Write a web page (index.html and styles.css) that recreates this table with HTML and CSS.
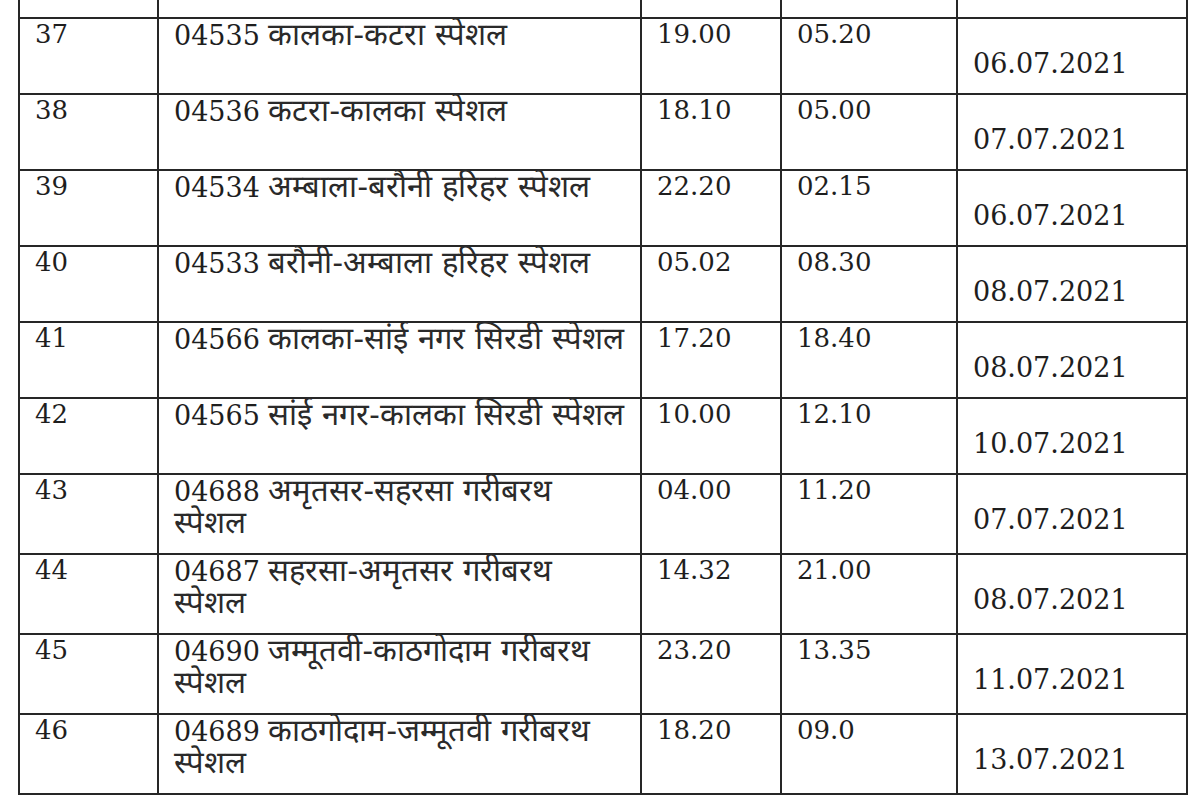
FILE: index.html
```html
<!DOCTYPE html>
<html lang="hi">
<head>
<meta charset="utf-8">
<title>स्पेशल ट्रेन सूची</title>
<link rel="stylesheet" href="styles.css">
</head>
<body>
<table class="trains">
  <colgroup>
    <col class="c-no">
    <col class="c-name">
    <col class="c-dep">
    <col class="c-arr">
    <col class="c-date">
  </colgroup>
  <tbody>
    <tr class="r-head"><td></td><td></td><td></td><td></td><td></td></tr>
    <tr class="r-a"><td>37</td><td class="name">04535 <span class="hi">कालका-कटरा स्पेशल</span></td><td>19.00</td><td>05.20</td><td class="date">06.07.2021</td></tr>
    <tr class="r-a"><td>38</td><td class="name">04536 <span class="hi">कटरा-कालका स्पेशल</span></td><td>18.10</td><td>05.00</td><td class="date">07.07.2021</td></tr>
    <tr class="r-a"><td>39</td><td class="name">04534 <span class="hi">अम्बाला-बरौनी हरिहर स्पेशल</span></td><td>22.20</td><td>02.15</td><td class="date">06.07.2021</td></tr>
    <tr class="r-a"><td>40</td><td class="name">04533 <span class="hi">बरौनी-अम्बाला हरिहर स्पेशल</span></td><td>05.02</td><td>08.30</td><td class="date">08.07.2021</td></tr>
    <tr class="r-a"><td>41</td><td class="name">04566 <span class="hi">कालका-सांई नगर सिरडी स्पेशल</span></td><td>17.20</td><td>18.40</td><td class="date">08.07.2021</td></tr>
    <tr class="r-a"><td>42</td><td class="name">04565 <span class="hi">सांई नगर-कालका सिरडी स्पेशल</span></td><td>10.00</td><td>12.10</td><td class="date">10.07.2021</td></tr>
    <tr class="r-b"><td>43</td><td class="name">04688 <span class="hi">अमृतसर-सहरसा गरीबरथ<br>स्पेशल</span></td><td>04.00</td><td>11.20</td><td class="date">07.07.2021</td></tr>
    <tr class="r-b"><td>44</td><td class="name">04687 <span class="hi">सहरसा-अमृतसर गरीबरथ<br>स्पेशल</span></td><td>14.32</td><td>21.00</td><td class="date">08.07.2021</td></tr>
    <tr class="r-b"><td>45</td><td class="name">04690 <span class="hi">जम्मूतवी-काठगोदाम गरीबरथ<br>स्पेशल</span></td><td>23.20</td><td>13.35</td><td class="date">11.07.2021</td></tr>
    <tr class="r-b"><td>46</td><td class="name">04689 <span class="hi">काठगोदाम-जम्मूतवी गरीबरथ<br>स्पेशल</span></td><td>18.20</td><td>09.0</td><td class="date">13.07.2021</td></tr>
  </tbody>
</table>
</body>
</html>
```

FILE: styles.css
```css
html, body {
  margin: 0;
  padding: 0;
  background: #ffffff;
}
body {
  overflow: hidden;
  height: 800px;
}
.trains {
  border-collapse: collapse;
  table-layout: fixed;
  width: 1168px;
  margin: -2px 0 0 18px;
  font-family: "DejaVu Serif", serif;
  font-size: 26px;
  line-height: 30px;
  color: #1e1e1e;
}
.c-no { width: 139px; }
.c-name { width: 483px; }
.c-dep { width: 140px; }
.c-arr { width: 176px; }
.c-date { width: 230px; }
.trains td {
  box-sizing: border-box;
  border: 2px solid #262626;
  vertical-align: top;
  padding: 0 4px 0 15px;
}
.trains td.name {
  font-size: 27px;
}
.hi {
  font-family: "DejaVu Serif", serif;
  font-size: 31px;
  line-height: 30px;
  color: #2a2a2a;
}
.r-head td { height: 19px; padding: 0; }
.r-a td { height: 76px; }
.r-b td { height: 80px; }
.trains td.date {
  padding-top: 30px;
  font-size: 27px;
}
```
